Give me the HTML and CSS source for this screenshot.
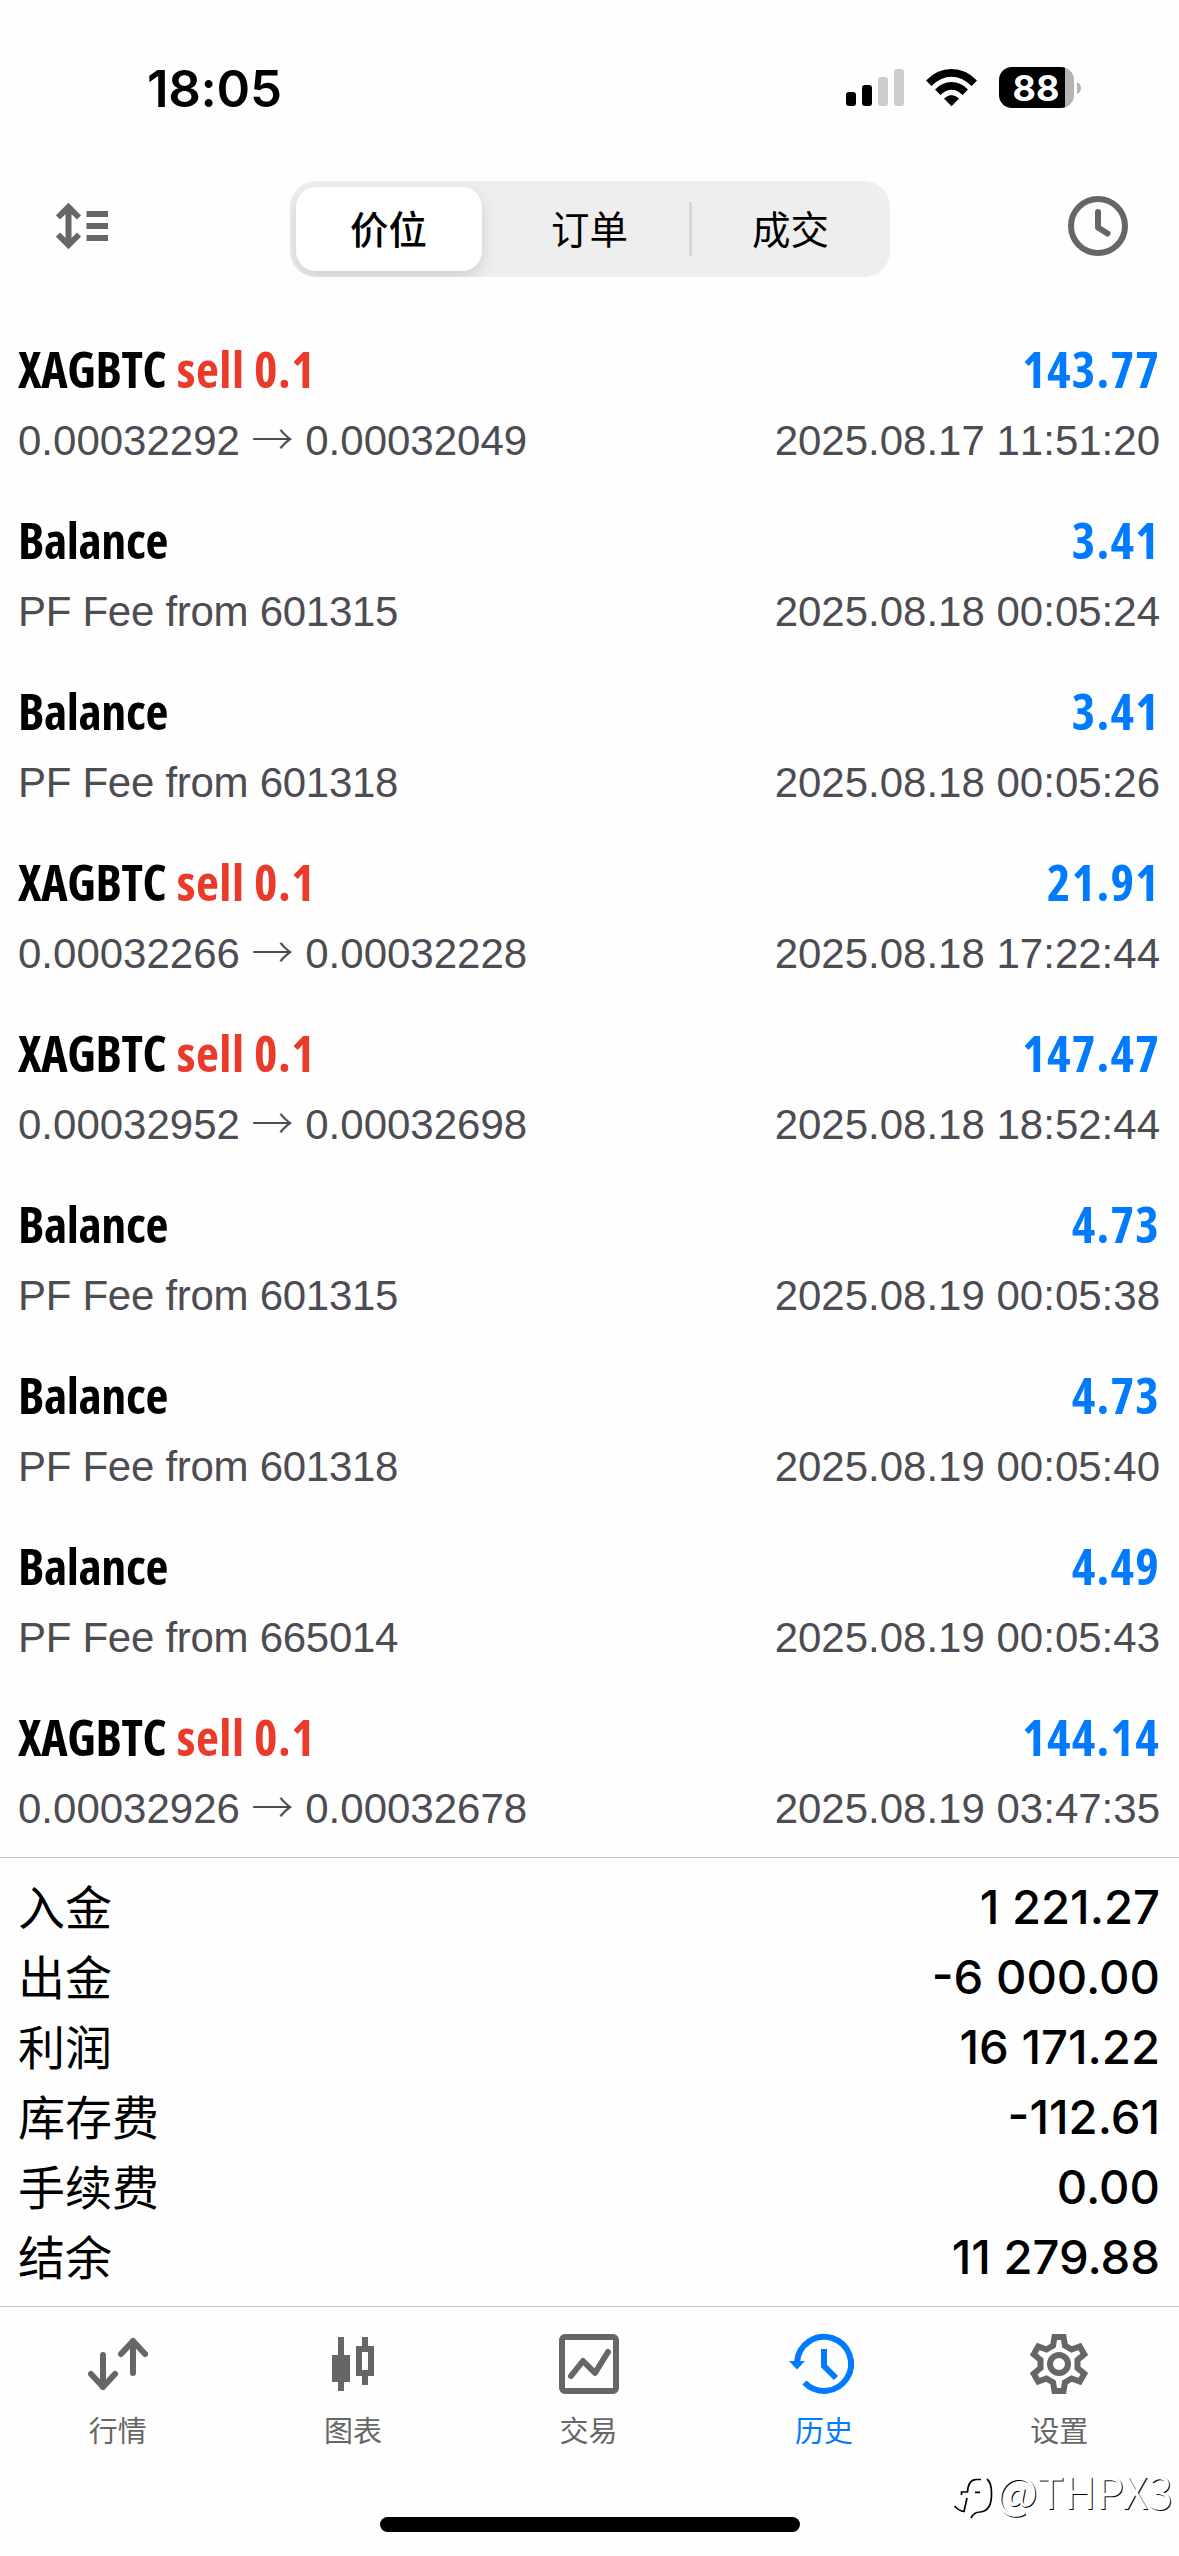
FILE: index.html
```html
<!DOCTYPE html>
<html lang="zh-CN">
<head>
<meta charset="utf-8">
<title>历史</title>
<link rel="stylesheet" href="styles.css">
</head>
<body>
<header class="status">
  <span class="time">18:05</span>
  <div class="indicators">
    <svg class="signal" width="58" height="37" viewBox="0 0 58 37"><rect y="23" width="10" height="14" rx="3"/><rect x="16" y="16" width="10" height="21" rx="3"/><rect x="32" y="8" width="10" height="29" rx="3" fill="#ccc"/><rect x="48" width="10" height="37" rx="3" fill="#ccc"/></svg>
    <svg class="wifi" width="51" height="37" viewBox="0 0 51 37"><path d="M0 11.500Q11 0 25.500 0T51 11.500L45.600 17Q36 7.800 25.500 7.800T5.400 17Z"/><path d="M9 20.500Q16 13 25.500 13T42 20.500L36.600 26Q31 20.800 25.500 20.800T14.400 26Z"/><path d="M18 29.500Q25.500 22.500 33 29.500L25.500 37.300Z"/></svg>
    <div class="battery"><span class="cell">88</span><svg width="4" height="12" viewBox="0 0 4 12"><path d="M0 0Q4 2 4 6T0 12Z" fill="#b3b3b3"/></svg></div>
  </div>
</header>
<div class="toolbar">
  <svg class="sort" width="52" height="46" viewBox="0 0 52 46"><g fill="none" stroke="#666" stroke-width="6"><path d="M12.500 3V43M2 14.500L12.500 4L23 14.500M2 31.500L12.500 42L23 31.500"/><path d="M30.500 11H52M30.500 23H52M30.500 35H52"/></g></svg>
  <div class="segments"><span class="seg active">价位</span><span class="seg divided">订单</span><span class="seg">成交</span></div>
  <svg class="clock" width="60" height="60" viewBox="0 0 60 60"><g fill="none" stroke="#666" stroke-width="6"><circle cx="30" cy="30" r="27"/><path d="M30 16V31.500L39.500 37.500" stroke-linecap="round" stroke-linejoin="round"/></g></svg>
</div>
<main class="history">
  <div class="deal"><span class="name">XAGBTC <b>sell 0.1</b></span><span class="amount">143.77</span><span class="note">0.00032292 <i>→</i> 0.00032049</span><span class="date">2025.08.17 11:51:20</span></div>
  <div class="deal"><span class="name">Balance</span><span class="amount">3.41</span><span class="note fee">PF Fee from 601315</span><span class="date">2025.08.18 00:05:24</span></div>
  <div class="deal"><span class="name">Balance</span><span class="amount">3.41</span><span class="note fee">PF Fee from 601318</span><span class="date">2025.08.18 00:05:26</span></div>
  <div class="deal"><span class="name">XAGBTC <b>sell 0.1</b></span><span class="amount">21.91</span><span class="note">0.00032266 <i>→</i> 0.00032228</span><span class="date">2025.08.18 17:22:44</span></div>
  <div class="deal"><span class="name">XAGBTC <b>sell 0.1</b></span><span class="amount">147.47</span><span class="note">0.00032952 <i>→</i> 0.00032698</span><span class="date">2025.08.18 18:52:44</span></div>
  <div class="deal"><span class="name">Balance</span><span class="amount">4.73</span><span class="note fee">PF Fee from 601315</span><span class="date">2025.08.19 00:05:38</span></div>
  <div class="deal"><span class="name">Balance</span><span class="amount">4.73</span><span class="note fee">PF Fee from 601318</span><span class="date">2025.08.19 00:05:40</span></div>
  <div class="deal"><span class="name">Balance</span><span class="amount">4.49</span><span class="note fee">PF Fee from 665014</span><span class="date">2025.08.19 00:05:43</span></div>
  <div class="deal"><span class="name">XAGBTC <b>sell 0.1</b></span><span class="amount">144.14</span><span class="note">0.00032926 <i>→</i> 0.00032678</span><span class="date">2025.08.19 03:47:35</span></div>
</main>
<section class="summary">
  <div class="total"><span class="label">入金</span><span class="sum">1 221.27</span></div>
  <div class="total"><span class="label">出金</span><span class="sum">-6 000.00</span></div>
  <div class="total"><span class="label">利润</span><span class="sum">16 171.22</span></div>
  <div class="total"><span class="label">库存费</span><span class="sum">-112.61</span></div>
  <div class="total"><span class="label">手续费</span><span class="sum">0.00</span></div>
  <div class="total"><span class="label">结余</span><span class="sum">11 279.88</span></div>
</section>
<nav class="tabs">
  <div class="tab"><svg width="60" height="60" viewBox="0 0 60 60"><g fill="none" stroke="currentColor" stroke-width="6" stroke-linecap="round" stroke-linejoin="round"><path d="M15 21V53M3 40L15 53L27 40M45 39V7M33 20L45 7L57 20"/></g></svg><span>行情</span></div>
  <div class="tab"><svg width="60" height="60" viewBox="0 0 60 60"><path fill="currentColor" fill-rule="evenodd" d="M15 3h6v18h6v27h-6v9h-6v-9H9V21h6zM39 3h6v9h6v30h-6v9h-6v-9h-6V12h6zM39 18v18h6V18z"/></svg><span>图表</span></div>
  <div class="tab"><svg width="60" height="60" viewBox="0 0 60 60"><g fill="none" stroke="currentColor" stroke-width="6" stroke-linejoin="round"><rect x="3" y="3" width="54" height="54" rx="3"/><path d="M12 42L24 27L36 39L49 18" stroke-linecap="round"/></g></svg><span>交易</span></div>
  <div class="tab current"><svg width="60" height="60" viewBox="0 0 60 60" overflow="visible"><g fill="none" stroke="currentColor" stroke-width="6"><path d="M3.100 28A27 27 0 1 1 10.500 48.500"/><path d="M30 15V32L42 44"/></g><path fill="currentColor" d="M-5 27H11L3 35.500Z"/></svg><span>历史</span></div>
  <div class="tab"><svg width="60" height="60" viewBox="0 0 60 60"><g fill="none" stroke="currentColor" stroke-width="6"><path d="M25.500 3H34.500L36 11.700L42.500 15.500L50.800 12.400L55.300 20.300L48.500 26V34L55.300 39.700L50.800 47.600L42.500 44.500L36 48.300L34.500 57H25.500L24 48.300L17.500 44.500L9.200 47.600L4.700 39.700L11.500 34V26L4.700 20.300L9.200 12.400L17.500 15.500L24 11.700Z"/><circle cx="30" cy="30" r="9"/></g></svg><span>设置</span></div>
</nav>
<div class="home"></div>
<div class="watermark"><svg width="42" height="44" viewBox="0 0 42 44"><g fill="none" stroke="#000" stroke-width="1.700"><path d="M28 1.500H23Q15 2 14.500 14H8.500V17M14 20L11 33.500Q6 33 1.500 28M22 14.300H27M34 1Q38.500 5 38.500 15Q39 33 27 34Q21 34 18 40"/></g></svg><span>@THPX3</span></div>
</body>
</html>
```
FILE: styles.css
```css
* { box-sizing: border-box; }
body {
  margin: 0;
  width: 1179px;
  height: 2556px;
  overflow: hidden;
  position: relative;
  display: flex;
  flex-direction: column;
  background: #fefefe;
  color: #000;
  font-family: Inter, "Noto Sans CJK SC", sans-serif;
}
svg { display: block; flex: none; }
.status {
  height: 175px;
  padding: 0 98px 0 147px;
  display: flex;
  justify-content: space-between;
}
.time {
  margin-top: 58px;
  font-size: 51px;
  line-height: 61px;
  font-weight: 600;
  letter-spacing: -0.3px;
}
.indicators { display: flex; height: 41px; margin-top: 67px; align-items: center; }
.wifi { margin-left: 22px; }
.battery { display: flex; align-items: center; gap: 3px; margin-left: 22px; }
.cell {
  width: 75px;
  height: 41px;
  padding-right: 1px;
  border-radius: 13px;
  background: linear-gradient(to right, #000 66px, #b3b3b3 66px);
  color: #fff;
  font-size: 36px;
  line-height: 42px;
  font-weight: 700;
  text-align: center;
}
.toolbar {
  height: 143px;
  padding: 6px 51px 0 56px;
  display: flex;
  justify-content: space-between;
  align-items: flex-start;
}
.sort { margin-top: 22px; }
.clock { margin-top: 15px; }
.segments {
  width: 600px;
  height: 96px;
  margin-left: 3px;
  padding: 6px;
  display: flex;
  justify-content: space-between;
  border-radius: 26px;
  background: #eee;
  overflow: hidden;
}
.seg {
  width: 186px;
  height: 84px;
  border-radius: 20px;
  font-family: "Noto Sans CJK SC", sans-serif;
  font-size: 38.500px;
  line-height: 80px;
  text-align: center;
}
.seg.active { background: #fff; font-weight: 500; box-shadow: 0 6px 16px rgba(0, 0, 0, 0.13); }
.seg.divided {
  width: 216px;
  background: linear-gradient(#d6d6d6, #d6d6d6) no-repeat right 6px center / 3px 54px;
  border-radius: 0;
}
.deal {
  height: 171px;
  padding: 26px 18px 0;
  display: grid;
  grid-template-columns: auto auto;
  grid-template-rows: 70px 60px;
  justify-content: space-between;
}
.name, .amount {
  font-family: "Open Sans", sans-serif;
  font-stretch: 75%;
  font-weight: 700;
  font-size: 50px;
  line-height: 50px;
  white-space: nowrap;
}
.name { letter-spacing: -0.4px; }
.name b { margin-left: 2px; color: #ea3b2a; font-weight: 700; letter-spacing: 0.5px; }
.amount { padding-right: 1px; color: #007aff; text-align: right; letter-spacing: 1.300px; }
.note, .date {
  font-family: "Liberation Sans", sans-serif;
  font-size: 42px;
  line-height: 54px;
  color: #4d4c52;
  white-space: nowrap;
  font-kerning: none;
}
.note i { font-family: "Noto Sans CJK SC", sans-serif; font-style: normal; font-weight: 300; line-height: 1; }
.note.fee { letter-spacing: -0.280px; }
.date { padding-right: 1px; text-align: right; }
.summary {
  height: 450px;
  padding: 14px 19px 14px 18px;
  border-top: 1px solid #c8c8ca;
  border-bottom: 1px solid #c8c8ca;
}
.total {
  height: 70px;
  display: flex;
  justify-content: space-between;
  line-height: 70px;
}
.label { font-family: "Noto Sans CJK SC", sans-serif; font-size: 47px; line-height: 66px; }
.sum { font-size: 47.200px; font-weight: 500; }
.tabs { height: 210px; padding: 27px 2px 0 0; display: flex; color: #666; }
.tab { flex: 1; display: flex; flex-direction: column; align-items: center; }
.tab span {
  margin-top: 13px;
  font-family: "Noto Sans CJK SC", sans-serif;
  font-size: 29px;
  line-height: 44px;
}
.tab.current { color: #007aff; }
.home { width: 420px; height: 15px; margin: 0 auto; border-radius: 8px; background: #000; }
.watermark {
  position: absolute;
  left: 953px;
  top: 2466px;
  display: flex;
  align-items: flex-start;
  color: #fff;
  font-family: "Noto Sans CJK SC", sans-serif;
  font-weight: 400;
  font-size: 44px;
  line-height: 48px;
  text-shadow: 1px 1px 0 #000;
}
.watermark svg { margin-top: 12px; }
.watermark span { margin-left: 1px; }
```
